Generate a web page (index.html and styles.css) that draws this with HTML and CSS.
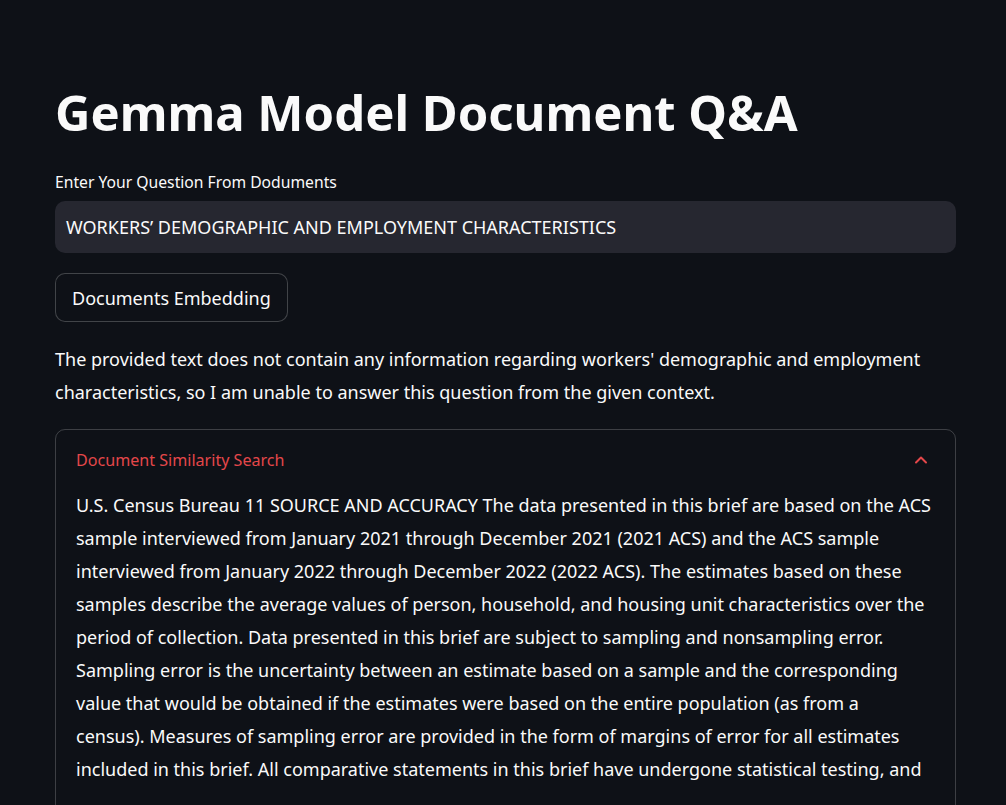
FILE: index.html
```html
<!DOCTYPE html>
<html lang="en">
<head>
<meta charset="utf-8">
<title>Gemma Model Document Q&amp;A</title>
<link rel="stylesheet" href="styles.css">
</head>
<body>
<main class="app">
  <h1 class="title">Gemma Model Document Q&amp;A</h1>
  <div class="field">
    <label class="field-label" for="q">Enter Your Question From Doduments</label>
    <div class="input-box" id="q">WORKERS’ DEMOGRAPHIC AND EMPLOYMENT CHARACTERISTICS</div>
  </div>
  <div class="btn-row">
    <button class="btn">Documents Embedding</button>
  </div>
  <p class="answer">The provided text does not contain any information regarding workers' demographic and employment characteristics, so I am unable to answer this question from the given context.</p>
  <section class="expander">
    <header class="exp-head">
      <span class="exp-title">Document Similarity Search</span>
      <svg class="chev" width="16" height="16" viewBox="0 0 16 16"><path d="M3 10.5 L8 5.5 L13 10.5" fill="none" stroke="#e4474a" stroke-width="2" stroke-linecap="round" stroke-linejoin="round"/></svg>
    </header>
    <div class="exp-body">
      <p>U.S. Census Bureau 11 SOURCE AND ACCURACY The data presented in this brief are based on the ACS<br>sample interviewed from January 2021 through December 2021 (2021 ACS) and the ACS sample<br>interviewed from January 2022 through December 2022 (2022 ACS). The estimates based on these<br>samples describe the average values of person, household, and housing unit characteristics over the<br>period of collection. Data presented in this brief are subject to sampling and nonsampling error.<br>Sampling error is the uncertainty between an estimate based on a sample and the corresponding<br>value that would be obtained if the estimates were based on the entire population (as from a<br>census). Measures of sampling error are provided in the form of margins of error for all estimates<br>included in this brief. All comparative statements in this brief have undergone statistical testing, and</p>
    </div>
  </section>
</main>
</body>
</html>
```

FILE: styles.css
```css
html, body {
  margin: 0;
  padding: 0;
  background: #0e1117;
  height: 100%;
  overflow: hidden;
}
body {
  font-family: "Noto Sans", "Open Sans", sans-serif;
  color: #fafafa;
}
.app {
  width: 901px;
  margin: 0 0 0 55px;
  padding-top: 78px;
}
.title {
  margin: 0;
  font-size: 49px;
  font-weight: 700;
  line-height: 68px;
}
.field {
  margin-top: 25px;
}
.field-label {
  display: block;
  font-size: 15.7px;
  line-height: 22px;
  color: #fafafa;
  margin-bottom: 8px;
}
.input-box {
  height: 52px;
  box-sizing: border-box;
  background: #262730;
  border-radius: 10px;
  padding: 0 11px;
  display: flex;
  align-items: center;
  font-size: 18px;
}
.btn-row {
  margin-top: 20px;
}
.btn {
  font-family: inherit;
  font-size: 18px;
  color: #fafafa;
  background: #0e1117;
  border: 1px solid rgba(250, 250, 250, 0.22);
  border-radius: 10px;
  height: 49px;
  padding: 0 16px;
}
.answer {
  margin: 21px 0 0;
  font-size: 18px;
  line-height: 33px;
}
.expander {
  margin-top: 20px;
  border: 1px solid rgba(250, 250, 250, 0.2);
  border-radius: 10px;
  height: 500px;
}
.exp-head {
  display: flex;
  justify-content: space-between;
  align-items: center;
  padding: 17px 26px 0 20px;
  height: 26px;
}
.exp-title {
  color: #e4474a;
  font-size: 16.1px;
}
.chev {
  display: block;
}
.exp-body {
  padding: 16px 18px 0 20px;
}
.exp-body p {
  margin: 0;
  font-size: 18px;
  line-height: 33px;
}
```
